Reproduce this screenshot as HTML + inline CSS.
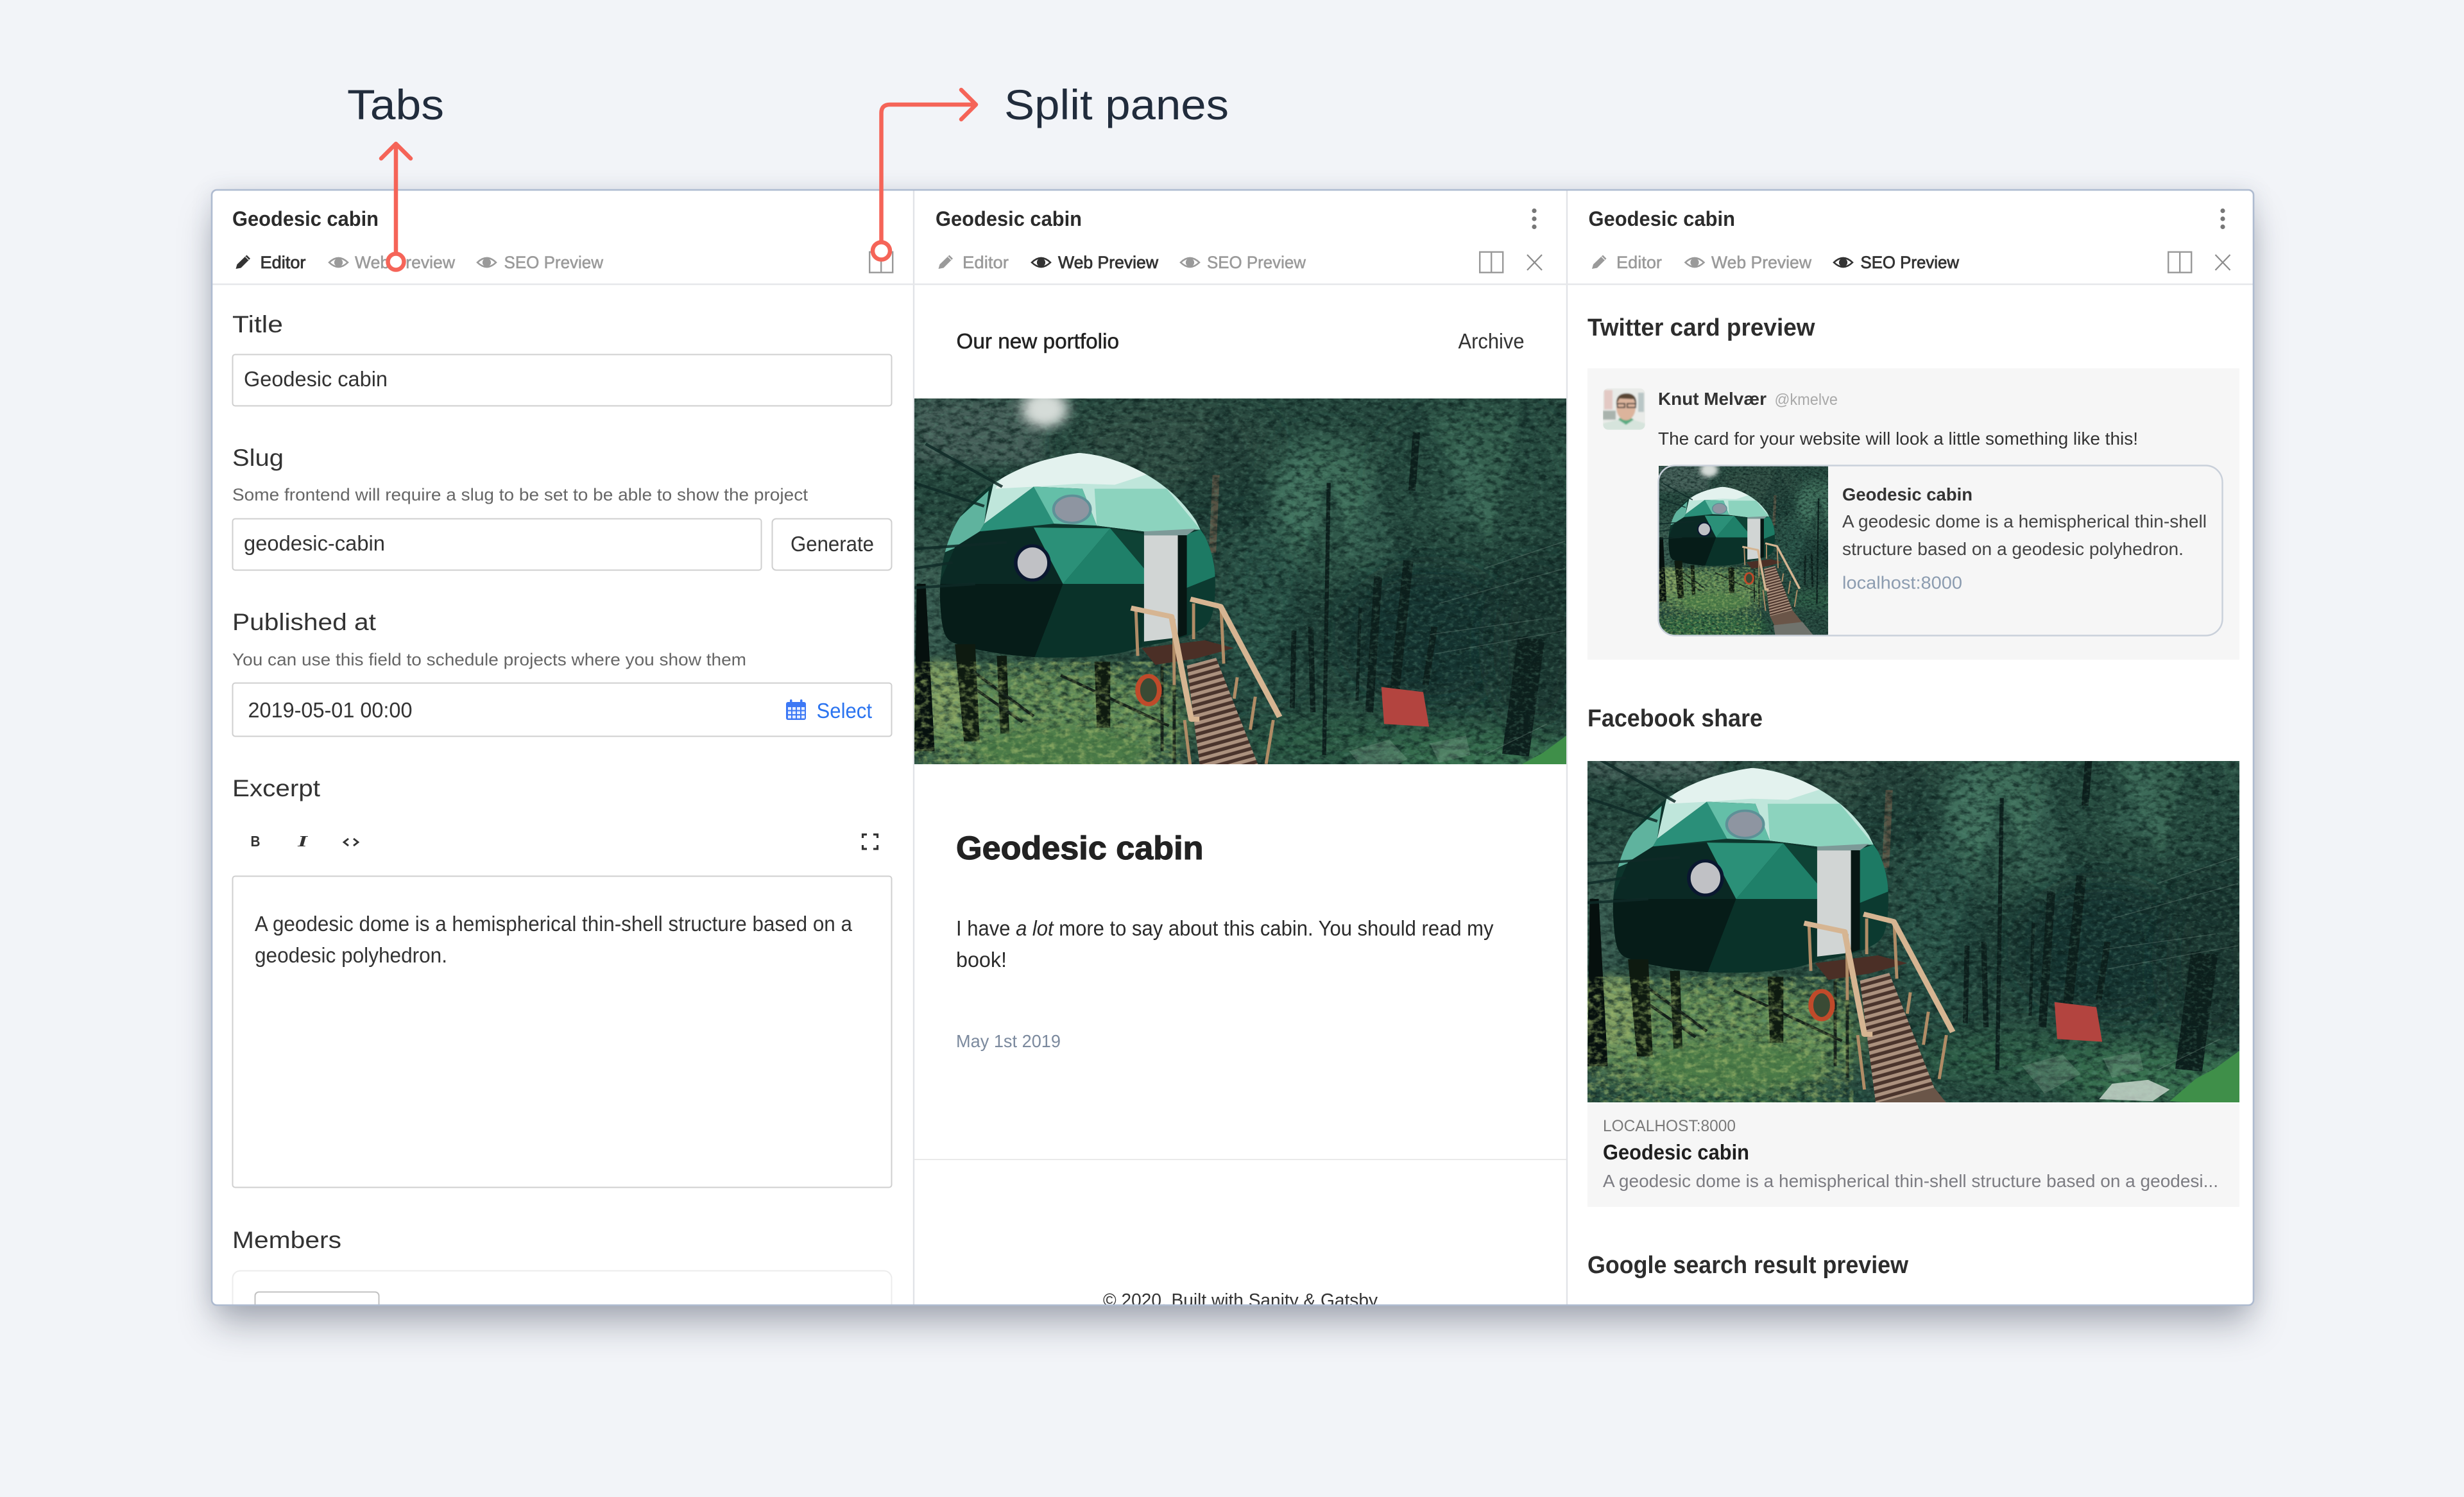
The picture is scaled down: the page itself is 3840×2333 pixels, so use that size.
<!DOCTYPE html>
<html lang="en"><head><meta charset="utf-8"><title>Geodesic cabin</title>
<style>
html,body{margin:0;padding:0;background:#f2f4f8;width:3840px;height:2333px;overflow:hidden}
#card{position:absolute;left:330px;top:296px;width:3182px;height:1738px;border-radius:8px;background:#fff;box-shadow:0 34px 56px -6px rgba(25,35,55,.34),0 0 34px rgba(60,80,110,.13)}
svg#page{position:absolute;left:0;top:0}
text{font-family:"Liberation Sans",sans-serif;white-space:pre}
.b{font-weight:700}
.m{stroke:currentColor;stroke-width:.55px}
.ttl{font-size:32px;font-weight:700;fill:#2b2b2b}
.tab{font-size:27px;stroke-width:.55px}
.on{fill:#333;stroke:#333;stroke-width:.8px}
.off{fill:#9a9a9a;stroke:#9a9a9a}
.lab{font-size:37px;fill:#333}
.hint{font-size:27px;fill:#666}
.val{font-size:33px;fill:#333}
.h3{font-size:38px;font-weight:700;fill:#2d2d2d}
.ann{font-size:66px;fill:#212c3c}
</style></head><body>
<div id="card"></div>
<svg id="page" width="3840" height="2333" viewBox="0 0 3840 2333" xmlns="http://www.w3.org/2000/svg">
<defs>
<filter id="bl" x="-60%" y="-60%" width="220%" height="220%"><feGaussianBlur stdDeviation="34"/></filter>
<filter id="bm" x="-50%" y="-50%" width="200%" height="200%"><feGaussianBlur stdDeviation="14"/></filter>
<filter id="bs" x="-50%" y="-50%" width="200%" height="200%"><feGaussianBlur stdDeviation="5"/></filter>
<filter id="ba" x="-10%" y="-10%" width="120%" height="120%"><feGaussianBlur stdDeviation="1"/></filter>
<filter id="nd" x="0" y="0" width="1" height="1" color-interpolation-filters="sRGB"><feTurbulence type="fractalNoise" baseFrequency=".05 .075" numOctaves="4" seed="7"/><feColorMatrix values="0 0 0 0 .04 0 0 0 0 .12 0 0 0 0 .11 2.6 0 0 0 -1.05"/></filter>
<filter id="nl" x="0" y="0" width="1" height="1" color-interpolation-filters="sRGB"><feTurbulence type="fractalNoise" baseFrequency=".09 .12" numOctaves="3" seed="21"/><feColorMatrix values="0 0 0 0 .36 0 0 0 0 .56 0 0 0 0 .48 0 2.6 0 0 -1.25"/></filter>
<filter id="nf" x="0" y="0" width="1" height="1" color-interpolation-filters="sRGB"><feTurbulence type="fractalNoise" baseFrequency=".06 .08" numOctaves="3" seed="33"/><feColorMatrix values="0 0 0 0 .62 0 0 0 0 .72 0 0 0 0 .42 2.8 0 0 0 -1.25"/></filter>
<pattern id="st" patternUnits="userSpaceOnUse" width="18" height="18" patternTransform="rotate(-18)"><rect width="18" height="18" fill="#4a342c"/><rect width="18" height="9" fill="#ab917e"/></pattern>
<clipPath id="cc"><rect x="330" y="296" width="3182" height="1738" rx="8"/></clipPath>
<clipPath id="tw"><path d="M2585 726H2849V990H2611a26 26 0 0 1-26-26Z"/></clipPath>
<clipPath id="av"><rect x="2498" y="605" width="66" height="65" rx="9"/></clipPath>
<clipPath id="dm"><path d="M400 703C470 708 560 750 620 820 670 880 703 950 703 1030 703 1090 700 1130 680 1150 640 1185 560 1195 530 1205 480 1228 380 1232 300 1228 220 1222 150 1205 120 1190 100 1180 95 1150 92 1080 90 1000 105 930 130 880 170 800 260 725 400 703Z"/></clipPath>

<g id="photo">
<rect width="1016" height="684" fill="#27493f"/>
<g transform="translate(-24.56,-341.2) scale(.7018,.606)">
<!-- colour masses -->
<rect x="35" y="563" width="290" height="170" fill="#46605a" filter="url(#bm)"/>
<ellipse cx="600" cy="680" rx="220" ry="120" fill="#314f45" filter="url(#bl)"/>
<ellipse cx="950" cy="860" rx="130" ry="200" fill="#3f6f5c" filter="url(#bl)"/>
<ellipse cx="1280" cy="780" rx="200" ry="200" fill="#35604f" filter="url(#bl)"/>
<ellipse cx="1180" cy="1170" rx="190" ry="180" fill="#183530" filter="url(#bl)"/>
<ellipse cx="1420" cy="1200" rx="100" ry="220" fill="#1a3732" filter="url(#bl)"/>
<ellipse cx="810" cy="1120" rx="90" ry="220" fill="#2b5549" filter="url(#bl)"/>
<ellipse cx="70" cy="1080" rx="50" ry="180" fill="#3d6055" filter="url(#bl)"/>
<ellipse cx="330" cy="1400" rx="320" ry="150" fill="#5f8a55" filter="url(#bl)"/>
<ellipse cx="90" cy="1330" rx="70" ry="90" fill="#809e62" filter="url(#bm)"/>
<ellipse cx="1000" cy="1450" rx="240" ry="70" fill="#2f5f46" filter="url(#bl)"/>
<ellipse cx="1300" cy="1500" rx="220" ry="90" fill="#38704f" filter="url(#bl)"/>
<ellipse cx="330" cy="1640" rx="340" ry="90" fill="#2f6840" filter="url(#bl)"/>
<!-- fir silhouettes -->
<g fill="#16332d" opacity=".4" filter="url(#bs)">
<path d="M955 760 1090 1250H820Z"/><path d="M1150 563 1330 980H970Z"/><path d="M1390 563 1483 800V1100H1280Z"/><path d="M720 563 860 900H600Z"/>
</g>
<g fill="#4f8470" opacity=".28" filter="url(#bs)">
<path d="M880 640 960 900H810Z"/><path d="M1260 640 1330 880H1190Z"/><path d="M1050 760 1110 980H980Z"/>
</g>
<!-- trunks -->
<g stroke="#0d1f1c" fill="none">
<path d="M955 780 945 1480" stroke-width="9"/><path d="M1065 1020 1045 1370" stroke-width="18"/><path d="M1132 980 1102 1310" stroke-width="22"/>
<path d="M878 1160 874 1360" stroke-width="11"/><path d="M915 1150 920 1370" stroke-width="12"/><path d="M1025 1100 1018 1340" stroke-width="7"/>
<path d="M1405 1180 1370 1480" stroke-width="60"/><path d="M1150 650 1140 800" stroke-width="16"/><path d="M1190 1150 1170 1300" stroke-width="14"/>
<path d="M705 760 697 960" stroke="#575344" stroke-width="16"/>
</g>
<rect x="35" y="563" width="1448" height="1130" filter="url(#nd)" opacity=".75"/>
<rect x="35" y="563" width="1448" height="1130" filter="url(#nl)" opacity=".4"/>
<ellipse cx="325" cy="590" rx="52" ry="48" fill="#d5dcd8" filter="url(#bm)"/>
<g stroke="#9ab0a6" stroke-width="2" fill="none" opacity=".28"><path d="M1180 1170 1430 1130M1190 1220 1480 1160M1300 1480 1440 1400M1200 1090 1480 1000M1300 1000 1480 930"/></g>
<!-- left trunk -->
<path d="M40 1040H60L80 1470H35Z" fill="#06100e"/>
<!-- dome -->
<g clip-path="url(#dm)">
<rect x="85" y="700" width="630" height="540" fill="#0d352c"/>
<path d="M400 700 480 700 570 750 640 830 670 900 545 905 440 890 408 795 300 790 190 885 215 760Z" fill="#bfe6db"/>
<path d="M400 700 480 705 560 755 480 785 400 782 300 790 215 795 240 745Z" fill="#e3f2ee"/>
<path d="M435 795 595 795 670 900 545 905 440 890Z" fill="#8cd3be"/>
<path d="M190 885 300 790 345 885 180 905Z" fill="#2a8f79"/>
<path d="M300 790 408 795 440 890 345 885Z" fill="#64bfa8"/>
<path d="M100 960 125 880 200 800 190 885 180 905 130 945Z" fill="#5fb39e"/>
<path d="M125 945 180 905 300 895 365 1040 90 1040Z" fill="#0a2924"/>
<path d="M300 895 470 897 365 1040Z" fill="#2b9078"/>
<path d="M470 897 545 1000 548 1040 365 1040Z" fill="#1f8069"/>
<path d="M470 897 545 912 545 1000Z" fill="#0e4235"/>
<path d="M85 1040H365L300 1235 120 1200 90 1170Z" fill="#061c18"/>
<path d="M365 1040H548L540 1200 480 1235 300 1235Z" fill="#0a3229"/>
<path d="M640 912 670 900 705 960 705 1020 640 1050Z" fill="#1d7a64"/>
<path d="M640 1050 705 1020 705 1140 640 1185Z" fill="#0c3a30"/>
</g>
<path d="M545 905 660 898 640 915H545Z" fill="#7d9a98"/>
<path d="M620 915H640V1170L620 1178Z" fill="#071613"/>
<path d="M545 915H620V1178L545 1188Z" fill="#d1d5d4"/>
<ellipse cx="385" cy="848" rx="41" ry="35" fill="#8e95a1" stroke="#5d9197" stroke-width="6"/>
<ellipse cx="297" cy="986" rx="37" ry="44" fill="#c0c1c5" stroke="#0a1730" stroke-width="8"/>
<path d="M35 950 240 933M35 1050 170 1040M35 1000 120 985M60 680 230 790M35 780 190 840" stroke="#0f2a27" stroke-width="7" opacity=".85"/>
<!-- legs and braces -->
<g fill="#0e1a10"><path d="M125 1195H170L180 1445H145Z"/><path d="M218 1225H240L246 1425H226Z"/><path d="M435 1240H470V1410H440Z"/></g>
<g stroke="#14201a" fill="none" stroke-width="7"><path d="M165 1265 300 1380M170 1310 275 1395M360 1275 600 1405M585 1250V1470M612 1250V1500"/></g>
<!-- foreground ferns -->
<ellipse cx="360" cy="1470" rx="190" ry="60" fill="#467845" opacity=".8" filter="url(#bm)"/>
<g opacity=".65"><rect x="35" y="1240" width="590" height="452" filter="url(#nf)"/></g>
<!-- platform -->
<path d="M540 1205 680 1185 745 1205 660 1232 570 1248Z" fill="#4b2f26"/>
<!-- ramp -->
<path d="M640 1250 705 1230 805 1525 675 1565Z" fill="url(#st)"/>
<path d="M675 1565 805 1525 860 1605 700 1625Z" fill="#6a5548"/>
<path d="M695 1625 862 1603 925 1692H705Z" fill="#70736d"/>
<!-- rails -->
<g stroke="#b08c66" stroke-width="7" fill="none"><path d="M527 1110 531 1225M611 1130 612 1300M655 1090V1182M716 1100 722 1245M752 1280 745 1335M792 1330 781 1415M832 1390 816 1503M635 1390 650 1530"/></g>
<g stroke="#d6b592" fill="none" stroke-width="13" stroke-linejoin="round"><path d="M516 1102 606 1124 650 1388 668 1388"/><path d="M648 1079 715 1098 846 1382"/></g>
<ellipse cx="555" cy="1313" rx="24" ry="36" fill="#3a4a34" stroke="#c04a2a" stroke-width="11"/>
<!-- red sign, leaves -->
<path d="M1072 1305 1165 1318 1178 1407 1078 1400Z" fill="#b3443f"/>
<path d="M1483 1430 1430 1475 1385 1503 1328 1560 1483 1570Z" fill="#3f8f49"/>
<path d="M1171 1555 1200 1515 1280 1505 1328 1530 1290 1560Z" fill="#cfdcd2" opacity=".8"/>
<path d="M1000 1470 1090 1440 1130 1490 1050 1540Z" fill="#a8c6b0" opacity=".22"/>
<path d="M1180 1450 1260 1430 1270 1480 1200 1500Z" fill="#a8c6b0" opacity=".22"/>
</g>
</g>
<g id="eye"><path d="M-14.5 0Q0-14 14.5 0 0 14-14.5 0Z" fill="none" stroke="currentColor" stroke-width="2.6"/><circle r="6.6" fill="currentColor"/></g>
<g id="pen"><path d="M-11.5 10.5-9.5 3.5 5.5-11 11-5.5-3.5 9Z" fill="currentColor"/><path d="M3.5-8.5 8.5-3.5" stroke="#fff" stroke-width="1.2"/></g>
<g id="spl"><rect x="1.2" y="1.2" width="36" height="32" fill="none" stroke="#999" stroke-width="2.4"/><path d="M19.2 1V33" stroke="#999" stroke-width="2.4"/></g>
<g id="xx"><path d="M0 0 23 24M23 0 0 24" stroke="#8c8c8c" stroke-width="2.2" fill="none"/></g>
<g id="dots" fill="#777"><circle cy="-12.5" r="3.6"/><circle r="3.6"/><circle cy="12.5" r="3.6"/></g>
</defs>

<g clip-path="url(#cc)">
<!-- separators -->
<path d="M1424 296V2034M2442 296V2034" stroke="#e1e3e7" stroke-width="2.4"/>
<path d="M330 443H3512" stroke="#e6e7ea" stroke-width="2.4"/>

<!-- PANE 1 -->
<text class="ttl" x="362" y="352" textLength="228" lengthAdjust="spacingAndGlyphs">Geodesic cabin</text>
<use href="#pen" x="379" y="408.5" color="#333"/>
<text class="tab on" x="405.5" y="418" textLength="71" lengthAdjust="spacingAndGlyphs">Editor</text>
<use href="#eye" x="527.5" y="409" color="#9a9a9a"/>
<text class="tab off" x="553" y="418" textLength="156" lengthAdjust="spacingAndGlyphs">Web Preview</text>
<use href="#eye" x="758.5" y="409" color="#9a9a9a"/>
<text class="tab off" x="785.5" y="418" textLength="154.5" lengthAdjust="spacingAndGlyphs">SEO Preview</text>
<use href="#spl" x="1354" y="391.5"/>

<text class="lab" x="362" y="518" textLength="79" lengthAdjust="spacingAndGlyphs">Title</text>
<rect x="362.5" y="552.5" width="1027" height="80" rx="4" fill="#fff" stroke="#cfcfcf" stroke-width="2"/>
<text class="val" x="380" y="602" textLength="224" lengthAdjust="spacingAndGlyphs">Geodesic cabin</text>

<text class="lab" x="362" y="726" textLength="80" lengthAdjust="spacingAndGlyphs">Slug</text>
<text class="hint" x="362" y="780" textLength="897" lengthAdjust="spacingAndGlyphs">Some frontend will require a slug to be set to be able to show the project</text>
<rect x="362.5" y="808.5" width="824" height="80" rx="4" fill="#fff" stroke="#cfcfcf" stroke-width="2"/>
<text class="val" x="380" y="858" textLength="220" lengthAdjust="spacingAndGlyphs">geodesic-cabin</text>
<rect x="1203.5" y="808.5" width="186" height="80" rx="6" fill="#fff" stroke="#cfcfcf" stroke-width="2"/>
<text class="val" x="1232" y="859" textLength="130" lengthAdjust="spacingAndGlyphs">Generate</text>

<text class="lab" x="362" y="982" textLength="224" lengthAdjust="spacingAndGlyphs">Published at</text>
<text class="hint" x="362" y="1037" textLength="801" lengthAdjust="spacingAndGlyphs">You can use this field to schedule projects where you show them</text>
<rect x="362.5" y="1064.5" width="1027" height="83" rx="4" fill="#fff" stroke="#cfcfcf" stroke-width="2"/>
<text class="val" x="386.5" y="1118" textLength="256" lengthAdjust="spacingAndGlyphs">2019-05-01 00:00</text>
<g>
<rect x="1225" y="1094" width="31" height="28" rx="3" fill="#3c78f5"/>
<rect x="1231" y="1090" width="3.5" height="8" rx="1.7" fill="#3c78f5"/><rect x="1247" y="1090" width="3.5" height="8" rx="1.7" fill="#3c78f5"/>
<g fill="#e6eeff"><rect x="1228" y="1102" width="5" height="4.5"/><rect x="1235" y="1102" width="5" height="4.5"/><rect x="1242" y="1102" width="5" height="4.5"/><rect x="1249" y="1102" width="5" height="4.5"/><rect x="1228" y="1108.5" width="5" height="4.5"/><rect x="1235" y="1108.5" width="5" height="4.5"/><rect x="1242" y="1108.5" width="5" height="4.5"/><rect x="1249" y="1108.5" width="5" height="4.5"/><rect x="1228" y="1115" width="5" height="4.5"/><rect x="1235" y="1115" width="5" height="4.5"/><rect x="1242" y="1115" width="5" height="4.5"/><rect x="1249" y="1115" width="5" height="4.5"/></g>
</g>
<text x="1272.5" y="1119" font-size="33" fill="#2b74f0" textLength="86.5" lengthAdjust="spacingAndGlyphs">Select</text>

<text class="lab" x="362" y="1241" textLength="137" lengthAdjust="spacingAndGlyphs">Excerpt</text>
<text class="b" x="390.5" y="1319" font-size="23" fill="#333" textLength="15" lengthAdjust="spacingAndGlyphs">B</text>
<text x="464" y="1319" font-size="24" font-weight="700" font-style="italic" fill="#333" style="font-family:'Liberation Serif',serif" textLength="15" lengthAdjust="spacingAndGlyphs">I</text>
<path d="M543 1307 536 1312.5 543 1318M551 1307 558 1312.5 551 1318" fill="none" stroke="#333" stroke-width="2.8"/>
<path d="M1344.500 1306V1300.500H1351M1361 1300.500H1367.500V1306M1367.500 1317V1323H1361M1351 1323H1344.500V1317" fill="none" stroke="#333" stroke-width="3.2"/>
<rect x="362.5" y="1365.5" width="1027" height="485" rx="4" fill="#fff" stroke="#cfcfcf" stroke-width="2"/>
<text x="397" y="1451" font-size="33" fill="#333" textLength="931" lengthAdjust="spacingAndGlyphs">A geodesic dome is a hemispherical thin-shell structure based on a</text>
<text x="397" y="1500" font-size="33" fill="#333" textLength="300" lengthAdjust="spacingAndGlyphs">geodesic polyhedron.</text>

<text class="lab" x="362" y="1945" textLength="170" lengthAdjust="spacingAndGlyphs">Members</text>
<rect x="362.500" y="1980.500" width="1027" height="100" rx="12" fill="#fff" stroke="#ececec" stroke-width="2"/>
<rect x="397.500" y="2013.500" width="193" height="60" rx="6" fill="#fff" stroke="#c2c2c2" stroke-width="2"/>

<!-- PANE 2 -->
<text class="ttl" x="1458" y="352" textLength="228" lengthAdjust="spacingAndGlyphs">Geodesic cabin</text>
<use href="#dots" x="2391" y="341"/>
<use href="#pen" x="1474" y="408.5" color="#9a9a9a"/>
<text class="tab off" x="1500" y="418" textLength="72" lengthAdjust="spacingAndGlyphs">Editor</text>
<use href="#eye" x="1622.5" y="409" color="#333"/>
<text class="tab on" x="1649" y="418" textLength="156" lengthAdjust="spacingAndGlyphs">Web Preview</text>
<use href="#eye" x="1854.5" y="409" color="#9a9a9a"/>
<text class="tab off" x="1881" y="418" textLength="154" lengthAdjust="spacingAndGlyphs">SEO Preview</text>
<use href="#spl" x="2305" y="391.5"/>
<use href="#xx" x="2380" y="397"/>

<text class="m" x="1490.500" y="543" font-size="33" fill="#222" color="#222" textLength="253.5" lengthAdjust="spacingAndGlyphs">Our new portfolio</text>
<text x="2272.500" y="543" font-size="33" fill="#333" textLength="103" lengthAdjust="spacingAndGlyphs">Archive</text>
<svg x="1425" y="621" width="1016" height="570" viewBox="0 0 1016 570" preserveAspectRatio="none"><use href="#photo"/></svg>
<text class="b" x="1490" y="1339" font-size="51" fill="#222" stroke="#222" stroke-width="1.2" textLength="385.500" lengthAdjust="spacingAndGlyphs">Geodesic cabin</text>
<text x="1490" y="1458" font-size="33" fill="#2b2b2b" textLength="837.5" lengthAdjust="spacingAndGlyphs">I have <tspan font-style="italic">a lot</tspan> more to say about this cabin. You should read my</text>
<text x="1490" y="1507" font-size="33" fill="#2b2b2b" textLength="79" lengthAdjust="spacingAndGlyphs">book!</text>
<text x="1490" y="1632" font-size="28" fill="#7c8a9e" textLength="163" lengthAdjust="spacingAndGlyphs">May 1st 2019</text>
<path d="M1425 1807H2441" stroke="#eaeaea" stroke-width="2"/>
<text x="1719" y="2036" font-size="29" fill="#333" textLength="428" lengthAdjust="spacingAndGlyphs">© 2020, Built with Sanity &amp; Gatsby</text>

<!-- PANE 3 -->
<text class="ttl" x="2475.5" y="352" textLength="228.5" lengthAdjust="spacingAndGlyphs">Geodesic cabin</text>
<use href="#dots" x="3464" y="341"/>
<use href="#pen" x="2492.500" y="408.5" color="#9a9a9a"/>
<text class="tab off" x="2519" y="418" textLength="71" lengthAdjust="spacingAndGlyphs">Editor</text>
<use href="#eye" x="2641" y="409" color="#9a9a9a"/>
<text class="tab off" x="2667" y="418" textLength="156" lengthAdjust="spacingAndGlyphs">Web Preview</text>
<use href="#eye" x="2872.500" y="409" color="#333"/>
<text class="tab on" x="2899.500" y="418" textLength="153.500" lengthAdjust="spacingAndGlyphs">SEO Preview</text>
<use href="#spl" x="3378" y="391.5"/>
<use href="#xx" x="3452.5" y="397"/>

<text class="h3" x="2474" y="523" textLength="354.500" lengthAdjust="spacingAndGlyphs">Twitter card preview</text>
<rect x="2474" y="574" width="1016" height="454" fill="#f6f6f6"/>
<g clip-path="url(#av)"><g filter="url(#ba)">
<rect x="2498" y="605" width="66" height="65" fill="#e9ebe8"/>
<rect x="2500" y="608" width="13" height="30" fill="#e3c9c4"/>
<rect x="2553" y="612" width="9" height="30" fill="#b9c6c6"/>
<rect x="2498" y="640" width="20" height="14" fill="#a9b3ad"/>
<path d="M2498 670V660L2522 654H2545L2564 660V670Z" fill="#d6e4dc"/>
<path d="M2522 654 2534 662 2546 654 2540 650H2526Z" fill="#5aac82"/>
<ellipse cx="2534" cy="635" rx="15" ry="20" fill="#dcb49c"/>
<path d="M2519 630Q2518 613 2535 613 2552 613 2550 632L2546 622 2524 621Z" fill="#5a4636"/>
<path d="M2520 629H2532V635H2521ZM2536 629H2549V635H2536Z" fill="none" stroke="#2a2a2a" stroke-width="1.8"/>
</g></g>
<text class="b" x="2584" y="631" font-size="28" fill="#333" textLength="169" lengthAdjust="spacingAndGlyphs">Knut Melvær</text>
<text x="2765.500" y="631" font-size="25" fill="#a9a9a9" textLength="98.500" lengthAdjust="spacingAndGlyphs">@kmelve</text>
<text x="2584" y="693" font-size="28" fill="#333" textLength="748" lengthAdjust="spacingAndGlyphs">The card for your website will look a little something like this!</text>
<g clip-path="url(#tw)"><svg x="2585" y="726" width="264" height="264" viewBox="0 0 684 684" preserveAspectRatio="none"><use href="#photo"/></svg></g>
<rect x="2584.500" y="725.500" width="879" height="265" rx="26" fill="none" stroke="#c9d0da" stroke-width="2.4"/>
<text class="b" x="2871" y="780" font-size="28" fill="#333" textLength="203" lengthAdjust="spacingAndGlyphs">Geodesic cabin</text>
<text x="2871" y="822" font-size="28" fill="#444" textLength="568" lengthAdjust="spacingAndGlyphs">A geodesic dome is a hemispherical thin-shell</text>
<text x="2871" y="865" font-size="28" fill="#444" textLength="532" lengthAdjust="spacingAndGlyphs">structure based on a geodesic polyhedron.</text>
<text x="2871" y="917.500" font-size="28" fill="#8c9cb0" textLength="187" lengthAdjust="spacingAndGlyphs">localhost:8000</text>

<text class="h3" x="2474" y="1132" textLength="273" lengthAdjust="spacingAndGlyphs">Facebook share</text>
<svg x="2474" y="1186" width="1016" height="532" viewBox="0 74 1016 532" preserveAspectRatio="none"><use href="#photo"/></svg>
<rect x="2474" y="1720" width="1016" height="161" fill="#f6f6f6"/>
<text x="2498" y="1763" font-size="25" fill="#7a7a7a" textLength="207" lengthAdjust="spacingAndGlyphs">LOCALHOST:8000</text>
<text class="b" x="2498" y="1807" font-size="33" fill="#1f1f1f" textLength="228" lengthAdjust="spacingAndGlyphs">Geodesic cabin</text>
<text x="2498" y="1850" font-size="28" fill="#7c7c82" textLength="959" lengthAdjust="spacingAndGlyphs">A geodesic dome is a hemispherical thin-shell structure based on a geodesi...</text>
<text class="h3" x="2474" y="1984" textLength="500" lengthAdjust="spacingAndGlyphs">Google search result preview</text>
</g>
<rect x="330" y="296" width="3182" height="1738" rx="8" fill="none" stroke="#aebbd0" stroke-width="2.6"/>

<!-- Annotations -->
<text class="ann" x="541" y="186" font-size="70" textLength="151" lengthAdjust="spacingAndGlyphs">Tabs</text>
<text class="ann" x="1565" y="186" textLength="350" lengthAdjust="spacingAndGlyphs">Split panes</text>
<g fill="none" stroke="#f56458" stroke-width="6.500" stroke-linecap="round" stroke-linejoin="round">
<path d="M617 395V225M594 247 617 224 640 247"/>
<path d="M1373.500 378V176Q1373.500 163 1387 163H1520M1498 140 1521 163 1498 186"/>
<circle cx="617" cy="408" r="12.500" fill="#fff"/>
<circle cx="1373.500" cy="391" r="13.500" fill="#fff"/>
</g>
</svg>
</body></html>
